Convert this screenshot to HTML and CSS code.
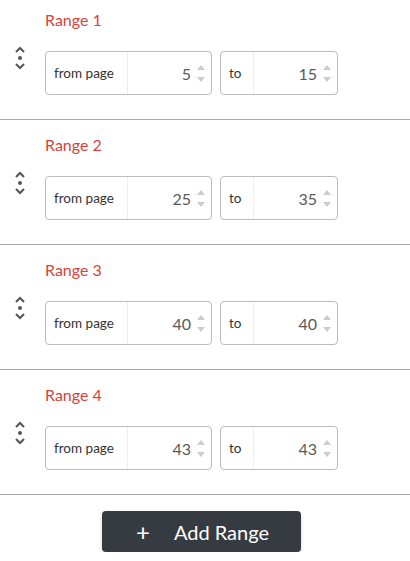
FILE: index.html
```html
<!DOCTYPE html>
<html lang="en">
  <head>
    <meta charset="UTF-8" />
    <meta name="viewport" content="width=device-width, initial-scale=1.0" />
    <title>Page Ranges</title>
    <link rel="stylesheet" href="styles.css">
  </head>
  <body>
    <div class="ranges">
      <div class="range first">
        <div class="handle">
          <svg width="12" height="26" viewBox="0 0 12 26"><path d="M2 7 L6 3 L10 7 M2 19 L6 23 L10 19" fill="none" stroke="#555" stroke-width="2"/><circle cx="6" cy="13" r="2" fill="#555"/></svg>
        </div>
        <div class="range-body">
          <div class="range-title">Range 1</div>
          <div class="fields">
            <div class="field from">
              <span class="field-label">from page</span>
              <span class="field-value">5<i class="spin"></i></span>
            </div>
            <div class="field to">
              <span class="field-label">to</span>
              <span class="field-value">15<i class="spin"></i></span>
            </div>
          </div>
        </div>
      </div>
      <div class="range">
        <div class="handle">
          <svg width="12" height="26" viewBox="0 0 12 26"><path d="M2 7 L6 3 L10 7 M2 19 L6 23 L10 19" fill="none" stroke="#555" stroke-width="2"/><circle cx="6" cy="13" r="2" fill="#555"/></svg>
        </div>
        <div class="range-body">
          <div class="range-title">Range 2</div>
          <div class="fields">
            <div class="field from">
              <span class="field-label">from page</span>
              <span class="field-value">25<i class="spin"></i></span>
            </div>
            <div class="field to">
              <span class="field-label">to</span>
              <span class="field-value">35<i class="spin"></i></span>
            </div>
          </div>
        </div>
      </div>
      <div class="range">
        <div class="handle">
          <svg width="12" height="26" viewBox="0 0 12 26"><path d="M2 7 L6 3 L10 7 M2 19 L6 23 L10 19" fill="none" stroke="#555" stroke-width="2"/><circle cx="6" cy="13" r="2" fill="#555"/></svg>
        </div>
        <div class="range-body">
          <div class="range-title">Range 3</div>
          <div class="fields">
            <div class="field from">
              <span class="field-label">from page</span>
              <span class="field-value">40<i class="spin"></i></span>
            </div>
            <div class="field to">
              <span class="field-label">to</span>
              <span class="field-value">40<i class="spin"></i></span>
            </div>
          </div>
        </div>
      </div>
      <div class="range">
        <div class="handle">
          <svg width="12" height="26" viewBox="0 0 12 26"><path d="M2 7 L6 3 L10 7 M2 19 L6 23 L10 19" fill="none" stroke="#555" stroke-width="2"/><circle cx="6" cy="13" r="2" fill="#555"/></svg>
        </div>
        <div class="range-body">
          <div class="range-title">Range 4</div>
          <div class="fields">
            <div class="field from">
              <span class="field-label">from page</span>
              <span class="field-value">43<i class="spin"></i></span>
            </div>
            <div class="field to">
              <span class="field-label">to</span>
              <span class="field-value">43<i class="spin"></i></span>
            </div>
          </div>
        </div>
      </div>
    </div>
    <div class="actions">
      <button class="add-btn"><span class="plus">+</span>Add Range</button>
    </div>
  </body>
</html>
```

FILE: styles.css
```css
body {
  margin: 0;
  font-family: 'Lato', 'Noto Sans', sans-serif;
  background: #fff;
  color: #333;
}
.range {
  display: flex;
  padding: 13px 0 24px 0;
  border-bottom: 1px solid #aaa;
}
.range.first {
  padding-top: 8px;
}
.handle {
  width: 45px;
  box-sizing: border-box;
  padding: 37px 0 0 14px;
}
.handle svg {
  display: block;
}
.range-title {
  height: 24px;
  line-height: 24px;
  font-size: 16px;
  color: #d9423a;
  margin-bottom: 19px;
}
.fields {
  display: flex;
  gap: 8px;
}
.field {
  display: flex;
  height: 44px;
  box-sizing: border-box;
  border: 1px solid #bbb;
  border-radius: 4px;
}
.field-label {
  display: flex;
  align-items: center;
  padding-left: 8px;
  font-size: 13.5px;
  color: #333;
  border-right: 1px solid #eee;
  box-sizing: border-box;
}
.from .field-label {
  width: 82px;
}
.to .field-label {
  width: 33px;
}
.field-value {
  display: flex;
  align-items: center;
  justify-content: flex-end;
  width: 83px;
  box-sizing: border-box;
  padding-right: 6px;
  font-size: 16px;
  color: #5a5a5a;
}
.spin {
  display: flex;
  flex-direction: column;
  justify-content: space-between;
  height: 17px;
  width: 8px;
  margin-left: 6px;
}
.spin::before,
.spin::after {
  content: "";
  display: block;
  border-left: 4px solid transparent;
  border-right: 4px solid transparent;
}
.spin::before {
  border-bottom: 5px solid #ccc;
}
.spin::after {
  border-top: 5px solid #ccc;
}
.actions {
  display: flex;
  justify-content: center;
  padding: 16px 7px 0 0;
}
.add-btn {
  width: 199px;
  height: 41px;
  border: none;
  border-radius: 4px;
  background: #363b42;
  color: #fff;
  font-family: 'Lato', 'Noto Sans', sans-serif;
  font-size: 20px;
  padding: 0 0 0 2px;
  box-shadow: 0 2px 4px rgba(0, 0, 0, 0.15);
  cursor: pointer;
}
.plus {
  font-size: 24px;
  margin-right: 24px;
  vertical-align: -1px;
}
```
